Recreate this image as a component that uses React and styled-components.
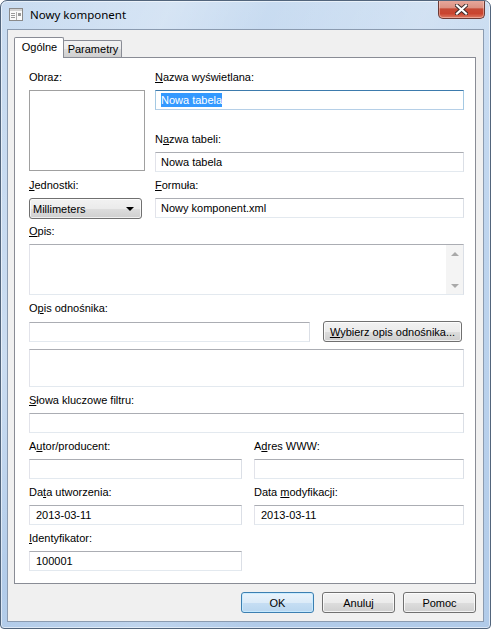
import React from 'react';
import styled, { createGlobalStyle, css } from 'styled-components';

const GlobalStyle = createGlobalStyle`
  html, body {
    margin: 0;
    padding: 0;
    background: #ffffff;
  }
  * {
    box-sizing: border-box;
  }
`;

const uiFont = `"Liberation Sans", Arial, sans-serif`;

const Window = styled.div`
  width: 491px;
  height: 629px;
  border: 1px solid #52657c;
  border-radius: 7px 7px 4px 4px;
  background:
    linear-gradient(115deg, rgba(255,255,255,0) 0%, rgba(255,255,255,0.25) 22%, rgba(255,255,255,0) 35%, rgba(255,255,255,0.18) 55%, rgba(255,255,255,0) 70%),
    linear-gradient(180deg, #c9dcf1 0%, #bdd4ee 40%, #b1cbe9 100%);
  box-shadow: inset 0 0 0 1px rgba(255, 255, 255, 0.55);
  display: flex;
  flex-direction: column;
  overflow: hidden;
`;

const TitleBar = styled.div`
  height: 28px;
  display: flex;
  align-items: flex-start;
  padding-left: 8px;
  flex-shrink: 0;
`;

const AppIcon = styled.svg`
  width: 14px;
  height: 13px;
  margin-top: 7px;
  flex-shrink: 0;
`;

const Title = styled.div`
  margin-left: 7px;
  margin-top: 6px;
  font-family: "Segoe UI", "Noto Sans", "Open Sans", sans-serif;
  font-size: 11.5px;
  color: #000;
  flex: 1;
`;

const CloseButton = styled.div`
  width: 47px;
  height: 19px;
  margin-top: -1px;
  margin-right: 5px;
  border: 1px solid #6b3a35;
  border-top: none;
  border-radius: 0 0 5px 5px;
  background: linear-gradient(180deg, #e8aa9e 0%, #dd9283 42%, #c64a36 50%, #c9442f 75%, #dd7a62 100%);
  box-shadow: inset 0 0 0 1px rgba(255, 220, 210, 0.45);
  display: flex;
  align-items: center;
  justify-content: center;
`;

const Client = styled.div`
  flex: 1;
  margin: 0 6px 6px 6px;
  border: 1px solid #8b9bb0;
  background: #f0f0f0;
  padding: 7px 7px 8px 6px;
  display: flex;
  flex-direction: column;
  font-family: ${uiFont};
  font-size: 11px;
  color: #000;
`;

const TabStrip = styled.div`
  height: 20px;
  display: flex;
  align-items: flex-end;
  position: relative;
  z-index: 1;
`;

const Tab = styled.div`
  border: 1px solid #898c95;
  border-bottom: none;
  border-radius: 2px 2px 0 0;
  display: flex;
  align-items: center;
  justify-content: center;
  ${(p) =>
    p.$active
      ? css`
          width: 50px;
          height: 21px;
          margin-bottom: -1px;
          background: #ffffff;
          padding: 0 0 2px 1px;
          position: relative;
          z-index: 2;
        `
      : css`
          width: 59px;
          height: 17px;
          margin-left: -1px;
          background: linear-gradient(180deg, #f2f2f2 0%, #ebebeb 50%, #dddddd 51%, #cfcfcf 100%);
          padding: 0 0 0 1px;
        `}
`;

const Pane = styled.div`
  flex: 1;
  border: 1px solid #898c95;
  background: #ffffff;
  padding: 13px 11px 12px 14px;
  display: flex;
  flex-direction: column;
`;

const TopGrid = styled.div`
  display: grid;
  grid-template-columns: 116px 1fr;
  column-gap: 10px;
  row-gap: 7px;
`;

const Column = styled.div`
  display: flex;
  flex-direction: column;
`;

const Label = styled.div`
  height: 13px;
  line-height: 13px;
  margin-bottom: 6px;
  margin-top: ${(p) => p.$top || 0}px;
  white-space: nowrap;
`;

const Acc = styled.span`
  text-decoration: underline;
`;

const ImageBox = styled.div`
  width: 116px;
  height: 81px;
  border: 1px solid #a0a0a0;
  background: #ffffff;
`;

const Input = styled.div`
  height: 20px;
  border: 1px solid #e3e9ef;
  border-top-color: #abadb3;
  border-left-color: #e2e3ea;
  border-right-color: #dbdfe6;
  background: #ffffff;
  padding-left: ${(p) => (p.$pad != null ? p.$pad : 5)}px;
  display: flex;
  align-items: center;
  white-space: nowrap;
  flex: ${(p) => (p.$grow ? 1 : 'none')};
  ${(p) =>
    p.$focused &&
    css`
      border-color: #b5cfe7;
      border-top-color: #3d7bad;
      border-left-color: #a4c9e3;
      border-right-color: #a4c9e3;
    `}
`;

const Selected = styled.span`
  background: #3399ff;
  color: #ffffff;
  padding: 1px 0;
`;

const Combo = styled.div`
  width: 113px;
  height: 21px;
  border: 1px solid #707070;
  border-radius: 3px;
  background: linear-gradient(180deg, #f2f2f2 0%, #ebebeb 50%, #dddddd 51%, #cfcfcf 100%);
  box-shadow: inset 0 0 0 1px rgba(255, 255, 255, 0.7);
  display: flex;
  align-items: center;
  justify-content: space-between;
  padding: 0 4px 0 3px;
`;

const Arrow = styled.span`
  width: 0;
  height: 0;
  border-left: 4px solid transparent;
  border-right: 4px solid transparent;
  border-top: 4px solid #000;
  margin-right: 3px;
`;

const Section = styled.div`
  display: flex;
  flex-direction: column;
  margin-top: ${(p) => p.$top || 7}px;
`;

const TextArea = styled.div`
  height: ${(p) => p.$h}px;
  border: 1px solid #e3e9ef;
  border-top-color: #abadb3;
  border-left-color: #e2e3ea;
  border-right-color: #dbdfe6;
  background: #ffffff;
  display: flex;
  justify-content: flex-end;
`;

const ScrollBar = styled.div`
  width: 17px;
  background: #f4f4f4;
  display: flex;
  flex-direction: column;
  justify-content: space-between;
  align-items: center;
  padding: 7px 0 6px;
`;

const ScrollArrow = styled.span`
  width: 0;
  height: 0;
  border-left: 4px solid transparent;
  border-right: 4px solid transparent;
  ${(p) =>
    p.$up
      ? css`border-bottom: 4px solid #a9a9a9;`
      : css`border-top: 4px solid #a9a9a9;`}
`;

const Row = styled.div`
  display: flex;
  align-items: center;
  gap: 13px;
`;

const PushButton = styled.div`
  height: 21px;
  width: ${(p) => p.$w}px;
  margin-right: ${(p) => p.$mr || 0}px;
  border: 1px solid #707070;
  border-radius: 3px;
  background: linear-gradient(180deg, #f2f2f2 0%, #ebebeb 50%, #dddddd 51%, #cfcfcf 100%);
  box-shadow: inset 0 0 0 1px rgba(255, 255, 255, 0.75);
  display: flex;
  align-items: center;
  justify-content: center;
  white-space: nowrap;
  ${(p) =>
    p.$default &&
    css`
      border-color: #3c7fb1;
      background: linear-gradient(180deg, #eaf4fc 0%, #dcebf8 50%, #c6def3 51%, #b9d6ef 100%);
      box-shadow: inset 0 0 0 1px rgba(200, 235, 255, 0.9);
    `}
`;

const TwoCol = styled.div`
  display: grid;
  grid-template-columns: 213px 1fr;
  column-gap: 12px;
  margin-top: 7px;
`;

const ButtonBar = styled.div`
  display: flex;
  justify-content: flex-end;
  gap: 8px;
  margin-top: 8px;
`;

function Field({ label, children, top }) {
  return (
    <Column>
      <Label $top={top}>{label}</Label>
      {children}
    </Column>
  );
}

export default function App() {
  return (
    <>
      <GlobalStyle />
      <Window>
        <TitleBar>
          <AppIcon viewBox="0 0 14 13">
            <rect x="0.5" y="0.5" width="13" height="12" fill="#fbfbfb" stroke="#8a8a8a" />
            <rect x="1" y="1" width="12" height="2" fill="#d4d4d4" />
            <line x1="2" y1="5.5" x2="6" y2="5.5" stroke="#9a9a9a" />
            <line x1="2" y1="7.5" x2="6" y2="7.5" stroke="#9a9a9a" />
            <line x1="2" y1="9.5" x2="6" y2="9.5" stroke="#9a9a9a" />
            <line x1="7.5" y1="4" x2="7.5" y2="12" stroke="#b0b0b0" />
            <rect x="9" y="5" width="3" height="3" fill="#9a9a9a" />
          </AppIcon>
          <Title>Nowy komponent</Title>
          <CloseButton>
            <svg width="13" height="11" viewBox="0 0 13 11">
              <path d="M2 1.5 L11 9.5 M11 1.5 L2 9.5" stroke="#3a2b2b" strokeWidth="4" strokeLinecap="square" />
              <path d="M2 1.5 L11 9.5 M11 1.5 L2 9.5" stroke="#ffffff" strokeWidth="2.2" strokeLinecap="square" />
            </svg>
          </CloseButton>
        </TitleBar>
        <Client>
          <TabStrip>
            <Tab $active>Ogólne</Tab>
            <Tab>Parametry</Tab>
          </TabStrip>
          <Pane>
            <TopGrid>
              <Field label="Obraz:">
                <ImageBox />
              </Field>
              <Column>
                <Label><Acc>N</Acc>azwa wyświetlana:</Label>
                <Input $focused>
                  <Selected>Nowa tabela</Selected>
                </Input>
                <Label $top={23}>N<Acc>a</Acc>zwa tabeli:</Label>
                <Input>Nowa tabela</Input>
              </Column>
              <Field label={<><Acc>J</Acc>ednostki:</>}>
                <Combo>
                  Millimeters
                  <Arrow />
                </Combo>
              </Field>
              <Field label={<><Acc>F</Acc>ormuła:</>}>
                <Input>Nowy komponent.xml</Input>
              </Field>
            </TopGrid>

            <Section $top={6}>
              <Label><Acc>O</Acc>pis:</Label>
              <TextArea $h={51}>
                <ScrollBar>
                  <ScrollArrow $up />
                  <ScrollArrow />
                </ScrollBar>
              </TextArea>
            </Section>

            <Section>
              <Label>O<Acc>p</Acc>is odnośnika:</Label>
              <Row>
                <Input $grow />
                <PushButton $w={139} $mr={2}>
                  <span><Acc>W</Acc>ybierz opis odnośnika...</span>
                </PushButton>
              </Row>
              <Section>
                <TextArea $h={38} />
              </Section>
            </Section>

            <Section>
              <Label><Acc>S</Acc>łowa kluczowe filtru:</Label>
              <Input />
            </Section>

            <TwoCol>
              <Field label={<>A<Acc>u</Acc>tor/producent:</>}>
                <Input />
              </Field>
              <Field label={<>A<Acc>d</Acc>res WWW:</>}>
                <Input />
              </Field>
            </TwoCol>

            <TwoCol>
              <Field label={<>Da<Acc>t</Acc>a utworzenia:</>}>
                <Input $pad={6}>2013-03-11</Input>
              </Field>
              <Field label={<>Data <Acc>m</Acc>odyfikacji:</>}>
                <Input $pad={6}>2013-03-11</Input>
              </Field>
            </TwoCol>

            <TwoCol>
              <Field label={<><Acc>I</Acc>dentyfikator:</>}>
                <Input $pad={6}>100001</Input>
              </Field>
            </TwoCol>
          </Pane>
          <ButtonBar>
            <PushButton $w={73} $default>OK</PushButton>
            <PushButton $w={73}>Anuluj</PushButton>
            <PushButton $w={73}>Pomoc</PushButton>
          </ButtonBar>
        </Client>
      </Window>
    </>
  );
}
